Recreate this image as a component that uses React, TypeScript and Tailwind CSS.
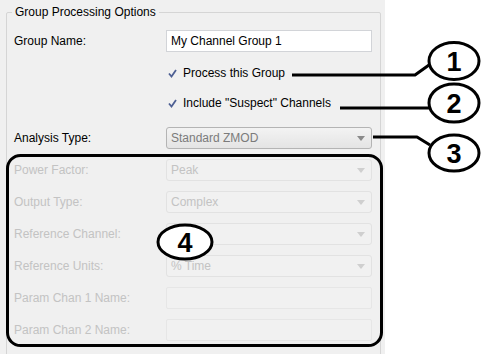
import React from "react";

const font = { fontFamily: '"Liberation Sans", Arial, sans-serif' };

function Arrow({ disabled }: { disabled?: boolean }) {
  return (
    <svg width="8" height="5" viewBox="0 0 8 5" className="shrink-0">
      <path d="M0 0 H8 L4 5 Z" fill={disabled ? "#cfcfcf" : "#8a8a8a"} />
    </svg>
  );
}

function Check() {
  return (
    <svg width="9" height="9" viewBox="0 0 9 9" className="shrink-0">
      <path d="M1 4.5 L3.5 7.5 L8 1" fill="none" stroke="#4d5f93" strokeWidth="1.8" />
    </svg>
  );
}

function Row({ label, disabled, children, className = "" }: { label: string; disabled?: boolean; children: React.ReactNode; className?: string }) {
  return (
    <div className={`flex items-center h-[22px] ${className}`}>
      <span className={`w-[159px] pl-[7px] ${disabled ? "text-[#c3c3c3]" : "text-black"}`}>{label}</span>
      {children}
    </div>
  );
}

function Combo({ value, disabled }: { value: string; disabled?: boolean }) {
  return (
    <div
      className={`w-[206px] h-[22px] rounded-[3px] border flex items-center justify-between pl-[4px] pr-[6px] ${
        disabled
          ? "border-[#e2e2e2] bg-[#f1f1f1] text-[#c3c3c3]"
          : "border-[#b4b4b4] bg-gradient-to-b from-[#f3f3f3] to-[#e4e4e4] text-[#7b7b7b]"
      }`}
    >
      <span>{value}</span>
      <Arrow disabled={disabled} />
    </div>
  );
}

function Field() {
  return <div className="w-[206px] h-[22px] rounded-[2px] border border-[#e6e6e6] bg-[#f1f1f1]" />;
}

export default function App() {
  return (
    <div className="relative w-[491px] h-[354px] bg-white overflow-hidden text-[12px]" style={font}>
      {/* Dialog panel */}
      <div className="w-[385px] h-full bg-[#f0f0f0] pl-[6px] pt-[12px]">
        <div className="relative w-[375px] h-[360px] border border-[#d5d5d5] rounded-[2px]">
          <span className="absolute left-[5px] -top-[8px] px-[3px] bg-[#f0f0f0] leading-[15px] text-black">
            Group Processing Options
          </span>

          <div className="flex flex-col pt-[17px]">
            <Row label="Group Name:">
              <div className="w-[206px] h-[22px] border border-[#d2d4d8] bg-white flex items-center pl-[4px] text-black">
                My Channel Group 1
              </div>
            </Row>

            <div className="flex items-center h-[22px] mt-[10px] pl-[161px] gap-[6px] text-black">
              <Check />
              <span>Process this Group</span>
            </div>

            <div className="flex items-center h-[22px] mt-[8px] pl-[161px] gap-[6px] text-black">
              <Check />
              <span>Include "Suspect" Channels</span>
            </div>

            <Row label="Analysis Type:" className="mt-[13px]">
              <Combo value="Standard ZMOD" />
            </Row>
            <Row label="Power Factor:" disabled className="mt-[10px]">
              <Combo value="Peak" disabled />
            </Row>
            <Row label="Output Type:" disabled className="mt-[10px]">
              <Combo value="Complex" disabled />
            </Row>
            <Row label="Reference Channel:" disabled className="mt-[10px]">
              <Combo value="" disabled />
            </Row>
            <Row label="Reference Units:" disabled className="mt-[10px]">
              <Combo value="% Time" disabled />
            </Row>
            <Row label="Param Chan 1 Name:" disabled className="mt-[10px]">
              <Field />
            </Row>
            <Row label="Param Chan 2 Name:" disabled className="mt-[10px]">
              <Field />
            </Row>
          </div>
        </div>
      </div>

      {/* Callouts */}
      <svg className="absolute inset-0 pointer-events-none" width="491" height="354" viewBox="0 0 491 354">
        <g fill="none" stroke="#000" strokeWidth="3" strokeLinejoin="round">
          <rect x="7.5" y="155.5" width="374" height="190" rx="13" />
          <path d="M292 75 H415 L429 65" />
          <path d="M340 108 H429" />
          <path d="M373 137 H417 L430 145" />
          <ellipse cx="454" cy="61" rx="25" ry="18.5" fill="#fff" />
          <ellipse cx="454" cy="103" rx="25" ry="19" fill="#fff" />
          <ellipse cx="454" cy="153" rx="25" ry="18" fill="#fff" />
          <ellipse cx="185" cy="242" rx="27" ry="17" fill="#fff" />
        </g>
        <g fontFamily='"Liberation Sans", Arial, sans-serif' fontWeight="bold" fontSize="27" textAnchor="middle" fill="#000">
          <text x="454" y="71">1</text>
          <text x="454" y="113">2</text>
          <text x="454" y="163">3</text>
          <text x="185" y="252">4</text>
        </g>
      </svg>
    </div>
  );
}
